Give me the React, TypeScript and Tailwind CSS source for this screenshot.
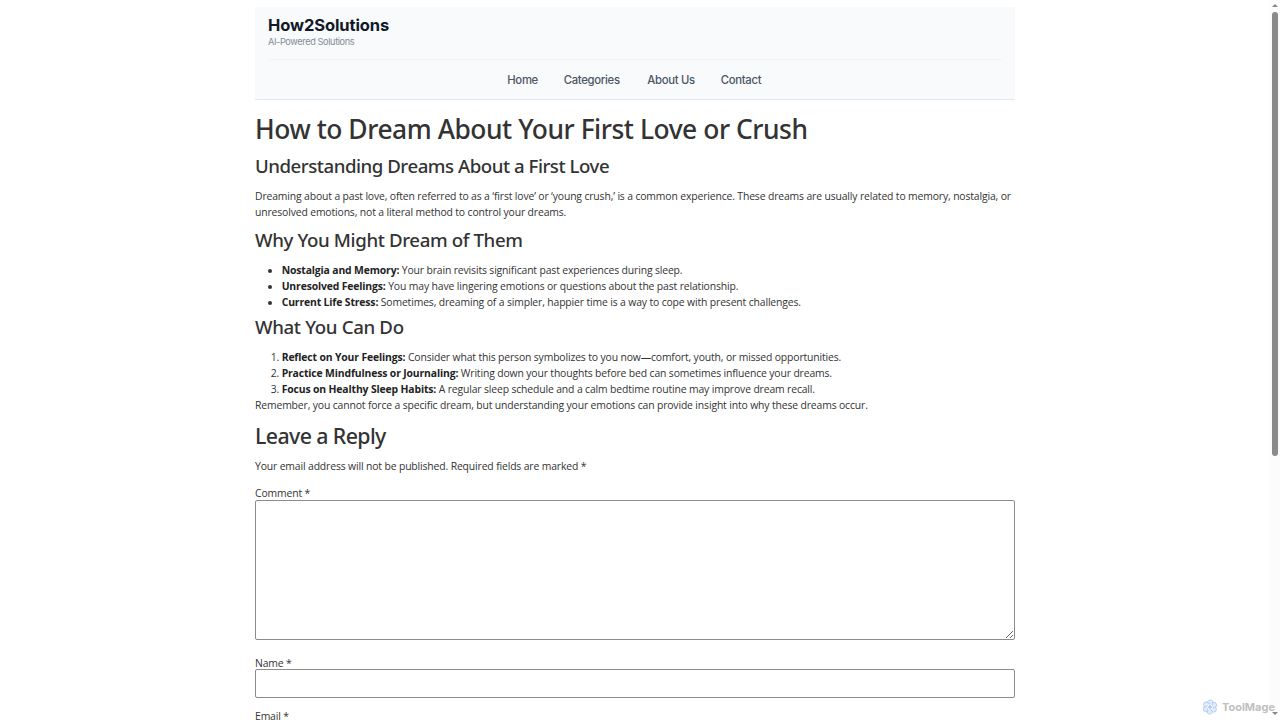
import type { ReactNode } from "react";

const navLinks = [
  { label: "Home", width: "w-[30px]" },
  { label: "Categories", width: "w-[57px]" },
  { label: "About Us", width: "w-[47px]" },
  { label: "Contact", width: "w-[42px]" },
];

const reasons = [
  {
    title: "Nostalgia and Memory:",
    text: "Your brain revisits significant past experiences during sleep.",
  },
  {
    title: "Unresolved Feelings:",
    text: "You may have lingering emotions or questions about the past relationship.",
  },
  {
    title: "Current Life Stress:",
    text: "Sometimes, dreaming of a simpler, happier time is a way to cope with present challenges.",
  },
];

const steps = [
  {
    title: "Reflect on Your Feelings:",
    text: "Consider what this person symbolizes to you now—comfort, youth, or missed opportunities.",
  },
  {
    title: "Practice Mindfulness or Journaling:",
    text: "Writing down your thoughts before bed can sometimes influence your dreams.",
  },
  {
    title: "Focus on Healthy Sleep Habits:",
    text: "A regular sleep schedule and a calm bedtime routine may improve dream recall.",
  },
];

function SiteHeader() {
  return (
    <header className="h-[93px] border-b border-[#e2e8f0] bg-[#f8fafc] px-[13px] font-['Inter',sans-serif] tracking-normal">
      <div className="h-[53px] border-b border-[#f1f3f5] pt-[8px]">
        <p className="text-[16.5px] leading-[21px] font-bold tracking-[-0.1px] text-[#111827]">
          How2Solutions
        </p>
        <p className="text-[9.2px] leading-[12px] tracking-[-0.38px] text-[#858b97]">
          AI-Powered Solutions
        </p>
      </div>
      <nav className="flex h-[39px] items-center justify-center gap-[26.5px] text-[11.3px] font-medium tracking-[-0.3px] text-[#4b5563]">
        {navLinks.map((link) => (
          <a key={link.label} href="#" className={`${link.width} whitespace-nowrap`}>
            {link.label}
          </a>
        ))}
      </nav>
    </header>
  );
}

function SectionTitle({ className, children }: { className: string; children: ReactNode }) {
  return (
    <h3
      className={`font-['Noto_Sans',sans-serif] text-[18.67px] leading-[22px] font-medium whitespace-nowrap ${className}`}
    >
      {children}
    </h3>
  );
}

function Entry({ title, text }: { title: string; text: string }) {
  return (
    <li className="whitespace-nowrap">
      <strong className="font-bold text-[#222]">{title}</strong> {text}
    </li>
  );
}

function Article() {
  return (
    <article>
      <h1 className="mt-[13px] font-['Noto_Sans',sans-serif] text-[26.4px] leading-[32px] font-medium tracking-[-0.46px] whitespace-nowrap">
        How to Dream About Your First Love or Crush
      </h1>
      <SectionTitle className="mt-[10px] tracking-[-0.48px]">
        Understanding Dreams About a First Love
      </SectionTitle>
      <p className="mt-[11px] whitespace-nowrap">
        Dreaming about a past love, often referred to as a ‘first love’ or ‘young crush,’ is a
        common experience. These dreams are usually related to memory, nostalgia, or
        <br />
        unresolved emotions, not a literal method to control your dreams.
      </p>
      <SectionTitle className="mt-[9px] tracking-[-0.38px]">
        Why You Might Dream of Them
      </SectionTitle>
      <ul className="mt-[11px] list-disc pl-[26.67px]">
        {reasons.map((item) => (
          <Entry key={item.title} {...item} />
        ))}
      </ul>
      <SectionTitle className="mt-[6px] tracking-[-0.35px]">What You Can Do</SectionTitle>
      <ol className="mt-[11px] list-decimal pl-[26.67px]">
        {steps.map((item) => (
          <Entry key={item.title} {...item} />
        ))}
      </ol>
      <p className="whitespace-nowrap">
        Remember, you cannot force a specific dream, but understanding your emotions can provide
        insight into why these dreams occur.
      </p>
    </article>
  );
}

function CommentForm() {
  return (
    <section>
      <h2 className="mt-[10px] font-['Noto_Sans',sans-serif] text-[21.33px] leading-[26px] font-medium tracking-[-0.6px]">
        Leave a Reply
      </h2>
      <p className="mt-[9px]">
        Your email address will not be published. Required fields are marked *
      </p>
      <form className="mt-[11px]">
        <label htmlFor="comment" className="block h-[15px]">
          Comment *
        </label>
        <textarea
          id="comment"
          className="block h-[140px] w-full resize-y rounded-[2px] border border-[#8c8c8c] bg-white"
        />
        <label htmlFor="name" className="mt-[15px] block h-[14px]">
          Name *
        </label>
        <input
          id="name"
          className="block h-[28.5px] w-full rounded-[2px] border border-[#8c8c8c] bg-white"
        />
        <label className="mt-[10.5px] block">Email *</label>
      </form>
    </section>
  );
}

function Scrollbar() {
  return (
    <div className="flex h-full w-[10px] flex-col items-center bg-[#fcfcfc]">
      <svg viewBox="0 0 6 3" className="mt-[4px] h-[3px] w-[6px] fill-[#858585]">
        <path d="M3 0 6 3H0z" />
      </svg>
      <div className="mt-[5px] h-[444px] w-[6px] rounded-full bg-[#8b8b8b]" />
      <svg viewBox="0 0 6 3" className="mt-auto mb-[5px] h-[3px] w-[6px] fill-[#858585]">
        <path d="M0 0h6L3 3z" />
      </svg>
    </div>
  );
}

function Watermark() {
  return (
    <div className="absolute right-[5px] bottom-[5px] flex items-center gap-[4px]">
      <svg viewBox="0 0 16 16" className="size-[16px] fill-[#e3edfb] stroke-[#b3cdf4]" strokeWidth="1">
        {[0, 60, 120, 180, 240, 300].map((angle) => (
          <path
            key={angle}
            d="M8 5.2 5.4 3.8C5.6 1.2 8.4.2 10.2 1.7l.6 1.6v3.2"
            transform={`rotate(${angle} 8 8)`}
          />
        ))}
        <circle cx="8" cy="8" r="1.4" className="fill-[#b3cdf4]" />
      </svg>
      <span className="font-['Inter',sans-serif] text-[11px] leading-[14px] font-bold text-[#c0c0c0]">
        ToolMage
      </span>
    </div>
  );
}

export default function App() {
  return (
    <div className="relative flex h-[720px] w-[1280px] overflow-hidden bg-white">
      <div className="flex-1">
        <main className="mt-[7px] ml-[255px] w-[760px] font-['Open_Sans','Noto_Sans',sans-serif] text-[10.4px] leading-[16px] tracking-[-0.14px] text-[#333]">
          <SiteHeader />
          <Article />
          <CommentForm />
        </main>
      </div>
      <Scrollbar />
      <Watermark />
    </div>
  );
}
